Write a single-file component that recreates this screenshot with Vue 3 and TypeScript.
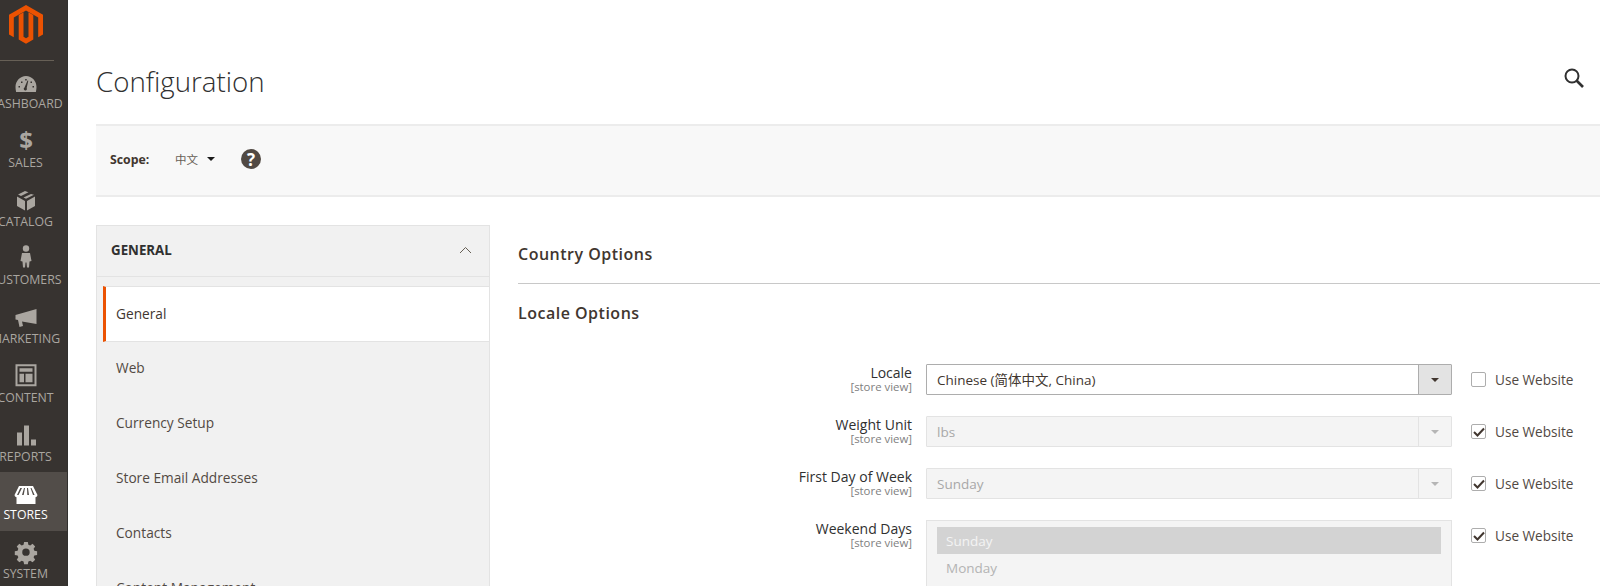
<script setup lang="ts">
interface NavItem {
  label: string
  active?: boolean
  icon: string
}

const navItems: NavItem[] = [
  { label: 'Dashboard', icon: 'dashboard' },
  { label: 'Sales', icon: 'sales' },
  { label: 'Catalog', icon: 'catalog' },
  { label: 'Customers', icon: 'customers' },
  { label: 'Marketing', icon: 'marketing' },
  { label: 'Content', icon: 'content' },
  { label: 'Reports', icon: 'reports' },
  { label: 'Stores', icon: 'stores', active: true },
  { label: 'System', icon: 'system' },
]

const sections = ['General', 'Web', 'Currency Setup', 'Store Email Addresses', 'Contacts', 'Content Management']

const rows = [
  { label: 'Locale', value: 'Chinese (简体中文, China)', inherit: false },
  { label: 'Weight Unit', value: 'lbs', inherit: true },
  { label: 'First Day of Week', value: 'Sunday', inherit: true },
]
</script>

<template>
  <div class="page">
    <aside class="sidebar">
      <div class="logo">
        <svg width="34" height="39" viewBox="0 0 34 39">
          <path fill="#eb5202" d="M17 0 34 9.800v19.600l-4.800 2.800V12.600L17 5.600 4.800 12.600v19.600L0 29.400V9.800z" />
          <path fill="#eb5202" d="M9.700 9.900 14.500 7.200v24.600l2.500 1.400 2.500-1.400V7.200l4.800 2.700v24.700L17 38.800l-7.300-4.200z" />
        </svg>
      </div>
      <nav class="nav">
        <a v-for="item in navItems" :key="item.label" class="nav-item" :class="{ 'nav-item--active': item.active }">
          <svg class="nav-icon" width="24" height="24" viewBox="0 0 24 24" fill="currentColor">
            <template v-if="item.icon === 'dashboard'">
              <path fill-rule="evenodd" d="M12 4C6 4 1.500 9 1.500 15c0 1.500.2 3 .6 5h19.800c.4-2 .6-3.500.6-5 0-6-4.500-11-10.500-11zm-1.500 11.500 3-7 .8.300-1.600 7.200a1.600 1.600 0 1 1-2.200-.5z" />
              <path fill="#373330" d="M4.500 14h1.500v1.500H4.500zM7 9.500h1.500V11H7zM11.200 7h1.500v1.500h-1.500zM16.500 9.500H18V11h-1.500zM18.500 14H20v1.500h-1.500z" />
            </template>
            <text v-else-if="item.icon === 'sales'" x="12" y="18" text-anchor="middle" class="dollar">$</text>
            <template v-else-if="item.icon === 'catalog'">
              <path transform="translate(0 -1)" d="M11 2 4 5.500l3 1.500 7.500-3.700zM17 5 9.500 8.500l2.500 1.300 8-4zM3 7.500v9.500l8 4.500V12zM21 7.500 13 12v9.500l8-4.500z" />
            </template>
            <template v-else-if="item.icon === 'customers'">
              <g transform="translate(0 -3.500)">
                <circle cx="12" cy="4" r="3.200" />
                <path d="M8 8.500h8l1.500 8-2 .5-.5 6h-2l-.5-5h-1l-.5 5h-2l-.5-6-2-.5z" />
              </g>
            </template>
            <template v-else-if="item.icon === 'marketing'">
              <path transform="translate(0 -2)" d="M1.500 10 22.500 4v15L8 16.500l1 4.500-3.500 1-1.500-7-2.500-.5z" />
            </template>
            <template v-else-if="item.icon === 'content'">
              <path transform="translate(0 -2.750)" fill-rule="evenodd" d="M1.500 1h21v22h-21zm2 2v18h17V3zm2 2h13v3.500H5.500zm0 5.500h4.500V19H5.500zm6 0h7V19h-7z" />
            </template>
            <template v-else-if="item.icon === 'reports'">
              <path transform="translate(0 -1.500)" d="M3 9h5v13H3zM10 2h5v20h-5zM17 16h5v6h-5z" />
            </template>
            <template v-else-if="item.icon === 'stores'">
              <path fill-rule="evenodd" d="M5 3h14l4.500 9a2.400 2.400 0 0 1-2 2.300V21h-19v-6.700A2.400 2.400 0 0 1 .5 12zm1.300 2L3 12h1.500L8 5zm3.700 0-2 7h1.700L11 5zm3 0 .3 7H15L14 5zm3.500 0 2.500 7h1.600L17.500 5z" />
            </template>
            <template v-else>
              <path transform="translate(.8 -1.500) scale(.93)" fill-rule="evenodd" d="M10 1.500h4l.6 3 2 .8 2.500-1.700 2.800 2.800-1.700 2.500.8 2 3 .6v4l-3 .6-.8 2 1.700 2.500-2.800 2.800-2.500-1.700-2 .8-.6 3h-4l-.6-3-2-.8-2.500 1.700-2.800-2.800 1.700-2.500-.8-2-3-.6v-4l3-.6.8-2-1.700-2.500 2.800-2.800 2.500 1.700 2-.8zM12 8.500a4 4 0 1 0 0 8 4 4 0 0 0 0-8z" />
            </template>
          </svg>
          <span class="nav-label">{{ item.label }}</span>
        </a>
      </nav>
    </aside>

    <div class="main">
      <header class="page-head">
        <h1 class="page-title">Configuration</h1>
        <svg class="search" width="22" height="22" viewBox="0 0 22 22" fill="none" stroke="#303030" stroke-width="2">
          <circle cx="9" cy="9" r="6.500" />
          <path d="m13.500 13.500 6.500 6.500" stroke-width="2.600" />
        </svg>
      </header>

      <div class="scope">
        <span class="scope-label">Scope:</span>
        <span class="scope-value">中文</span>
        <span class="scope-caret"></span>
        <span class="help">?</span>
      </div>

      <div class="columns">
        <div class="tabs">
          <div class="tabs-head">
            <span>GENERAL</span>
            <svg width="13" height="8" viewBox="0 0 13 8" fill="none" stroke="#676056" stroke-width="1">
              <path d="m1 7 5.500-5.500L12 7" />
            </svg>
          </div>
          <ul class="tabs-list">
            <li v-for="(section, i) in sections" :key="section" class="tab" :class="{ 'tab--active': i === 0 }">{{ section }}</li>
          </ul>
        </div>

        <section class="content">
          <h2 class="section-title section-title--ruled">Country Options</h2>
          <h2 class="section-title">Locale Options</h2>

          <div class="form">
            <div v-for="row in rows" :key="row.label" class="row">
              <div class="row-label">
                <span class="row-name">{{ row.label }}</span>
                <span class="row-scope">[store view]</span>
              </div>
              <div class="select" :class="{ 'select--disabled': row.inherit }">
                <span class="select-value">{{ row.value }}</span>
                <span class="select-btn"><i class="select-caret"></i></span>
              </div>
              <label class="use">
                <span class="check">
                  <svg v-if="row.inherit" width="12" height="10" viewBox="0 0 12 10" fill="none" stroke="#41362f" stroke-width="2"><path d="m1 5 3.500 3.500L11 1.500" /></svg>
                </span>
                Use Website
              </label>
            </div>

            <div class="row">
              <div class="row-label">
                <span class="row-name">Weekend Days</span>
                <span class="row-scope">[store view]</span>
              </div>
              <div class="multi">
                <div class="multi-opt multi-opt--selected">Sunday</div>
                <div class="multi-opt">Monday</div>
              </div>
              <label class="use">
                <span class="check">
                  <svg width="12" height="10" viewBox="0 0 12 10" fill="none" stroke="#41362f" stroke-width="2"><path d="m1 5 3.500 3.500L11 1.500" /></svg>
                </span>
                Use Website
              </label>
            </div>
          </div>
        </section>
      </div>
    </div>
  </div>
</template>

<style>
html, body {
  margin: 0;
  overflow: hidden;
  background: #fff;
}
</style>

<style scoped>
.page {
  display: flex;
  width: 1600px;
  height: 586px;
  overflow: hidden;
  font-family: "Open Sans", "Noto Sans CJK SC", sans-serif;
  color: #41362f;
}

.sidebar {
  flex: none;
  width: 68px;
  height: 586px;
  overflow: hidden;
  background: #373330;
  border-right: 1px solid #31302e;
  box-sizing: border-box;
}

.logo {
  width: 54px;
  height: 61px;
  padding: 5px 0 0 9px;
  box-sizing: border-box;
  border-bottom: 1px solid #676056;
}

.nav-item {
  display: flex;
  flex-direction: column;
  align-items: center;
  width: 51px;
  height: 58.750px;
  color: #aaa6a0;
}

.nav-item--active {
  width: 67px;
  padding-right: 16px;
  box-sizing: border-box;
  background: #524d49;
  color: #fff;
}

.nav-icon {
  flex: none;
  margin-top: 11px;
  overflow: visible;
}

.dollar {
  font-family: "Open Sans", sans-serif;
  font-size: 24px;
  font-weight: 700;
}

.nav-label {
  font-size: 12.300px;
  line-height: 16px;
  text-transform: uppercase;
  white-space: nowrap;
}

.main {
  flex: 1;
  min-width: 0;
  padding-left: 28px;
}

.page-head {
  display: flex;
  align-items: flex-start;
  justify-content: space-between;
  height: 124px;
  padding-right: 15px;
  box-sizing: border-box;
}

.page-title {
  margin: 61px 0 0;
  font-size: 27.700px;
  font-weight: 300;
  line-height: 40px;
  color: #303030;
}

.search {
  margin-top: 67px;
}

.scope {
  display: flex;
  align-items: center;
  height: 73px;
  padding: 0 0 3px 14px;
  box-sizing: border-box;
  background: #f8f8f8;
  border-top: 2px solid #ececec;
  border-bottom: 2px solid #ececec;
}

.scope-label {
  width: 65px;
  font-size: 12.300px;
  font-weight: 700;
}

.scope-value {
  font-size: 11.500px;
  color: #676056;
}

.scope-caret {
  margin-left: 9px;
  border-left: 4px solid transparent;
  border-right: 4px solid transparent;
  border-top: 4px solid #1a1a1a;
}

.help {
  display: flex;
  align-items: center;
  justify-content: center;
  width: 20px;
  height: 20px;
  margin-left: 26px;
  border-radius: 50%;
  background: #514943;
  color: #fff;
  font-size: 17px;
  font-weight: 700;
}

.columns {
  display: flex;
  gap: 28px;
  margin-top: 28px;
}

.tabs {
  flex: none;
  width: 394px;
  box-sizing: border-box;
  background: #f1f1f1;
  border: 1px solid #e3e3e3;
  border-bottom: 0;
}

.tabs-head {
  display: flex;
  align-items: center;
  justify-content: space-between;
  height: 51px;
  padding: 0 17px 3px 14px;
  box-sizing: border-box;
  font-size: 13.300px;
  font-weight: 700;
  color: #303030;
  border-bottom: 1px solid #e3e3e3;
}

.tabs-list {
  margin: 9px 0 0;
  padding: 0;
  list-style: none;
}

.tab {
  display: flex;
  align-items: center;
  height: 54.800px;
  margin-left: 6px;
  padding: 0 0 3px 10px;
  font-size: 13.700px;
  color: #514943;
  border-left: 3px solid transparent;
  box-sizing: border-box;
}

.tab--active {
  height: 56px;
  padding-bottom: 1px;
  background: #fff;
  border-left-color: #eb5202;
  border-top: 1px solid #e3e3e3;
  border-bottom: 1px solid #e3e3e3;
  color: #41362f;
}

.content {
  flex: 1;
  min-width: 0;
}

.section-title {
  margin: 0;
  font-size: 16px;
  font-weight: 600;
  line-height: 20px;
  letter-spacing: .5px;
  color: #41362f;
}

.section-title--ruled {
  height: 39px;
  padding-top: 19px;
  border-bottom: 1px solid #c8c8c8;
  margin-bottom: 19px;
}

.form {
  margin-top: 41px;
  display: flex;
  flex-direction: column;
  gap: 21px;
}

.row {
  display: flex;
  align-items: flex-start;
}

.row-label {
  flex: none;
  width: 394px;
  padding-top: 1px;
  display: flex;
  flex-direction: column;
  align-items: flex-end;
}

.row-name {
  font-size: 14px;
  line-height: 15px;
  color: #303030;
}

.row-scope {
  font-size: 11.400px;
  line-height: 13px;
  color: #808080;
}

.select {
  flex: none;
  display: flex;
  width: 526px;
  height: 31px;
  margin-left: 14px;
  box-sizing: border-box;
  border: 1px solid #adadad;
  border-radius: 1px;
  background: #fff;
  font-size: 13.500px;
}

.select-value {
  flex: 1;
  padding-left: 10px;
  line-height: 30px;
  color: #41362f;
}

.select-btn {
  display: flex;
  align-items: center;
  justify-content: center;
  width: 32px;
  background: #e3e3e3;
  border-left: 1px solid #adadad;
}

.select-caret {
  border-left: 4px solid transparent;
  border-right: 4px solid transparent;
  border-top: 4px solid #41362f;
}

.select--disabled {
  background: #f4f4f4;
  border-color: #e3e3e3;
}

.select--disabled .select-value {
  color: #a8a8a8;
}

.select--disabled .select-btn {
  background: #f4f4f4;
  border-left-color: #e3e3e3;
}

.select--disabled .select-caret {
  border-top-color: #b5b5b5;
}

.multi {
  flex: none;
  width: 526px;
  height: 140px;
  margin-left: 14px;
  padding: 6px 10px;
  box-sizing: border-box;
  background: #f4f4f4;
  border: 1px solid #e3e3e3;
  font-size: 13.500px;
  color: #b3b3b3;
}

.multi-opt {
  height: 27px;
  line-height: 29px;
  padding-left: 9px;
}

.multi-opt--selected {
  background: #d3d3d3;
  color: #f4f4f4;
}

.use {
  display: flex;
  align-items: center;
  height: 31px;
  margin-left: 19px;
  font-size: 13.600px;
  color: #514943;
  white-space: nowrap;
}

.check {
  display: flex;
  align-items: center;
  justify-content: center;
  width: 15px;
  height: 15px;
  margin-right: 9px;
  box-sizing: border-box;
  background: #fff;
  border: 1px solid #adadad;
  border-radius: 2px;
}
</style>
